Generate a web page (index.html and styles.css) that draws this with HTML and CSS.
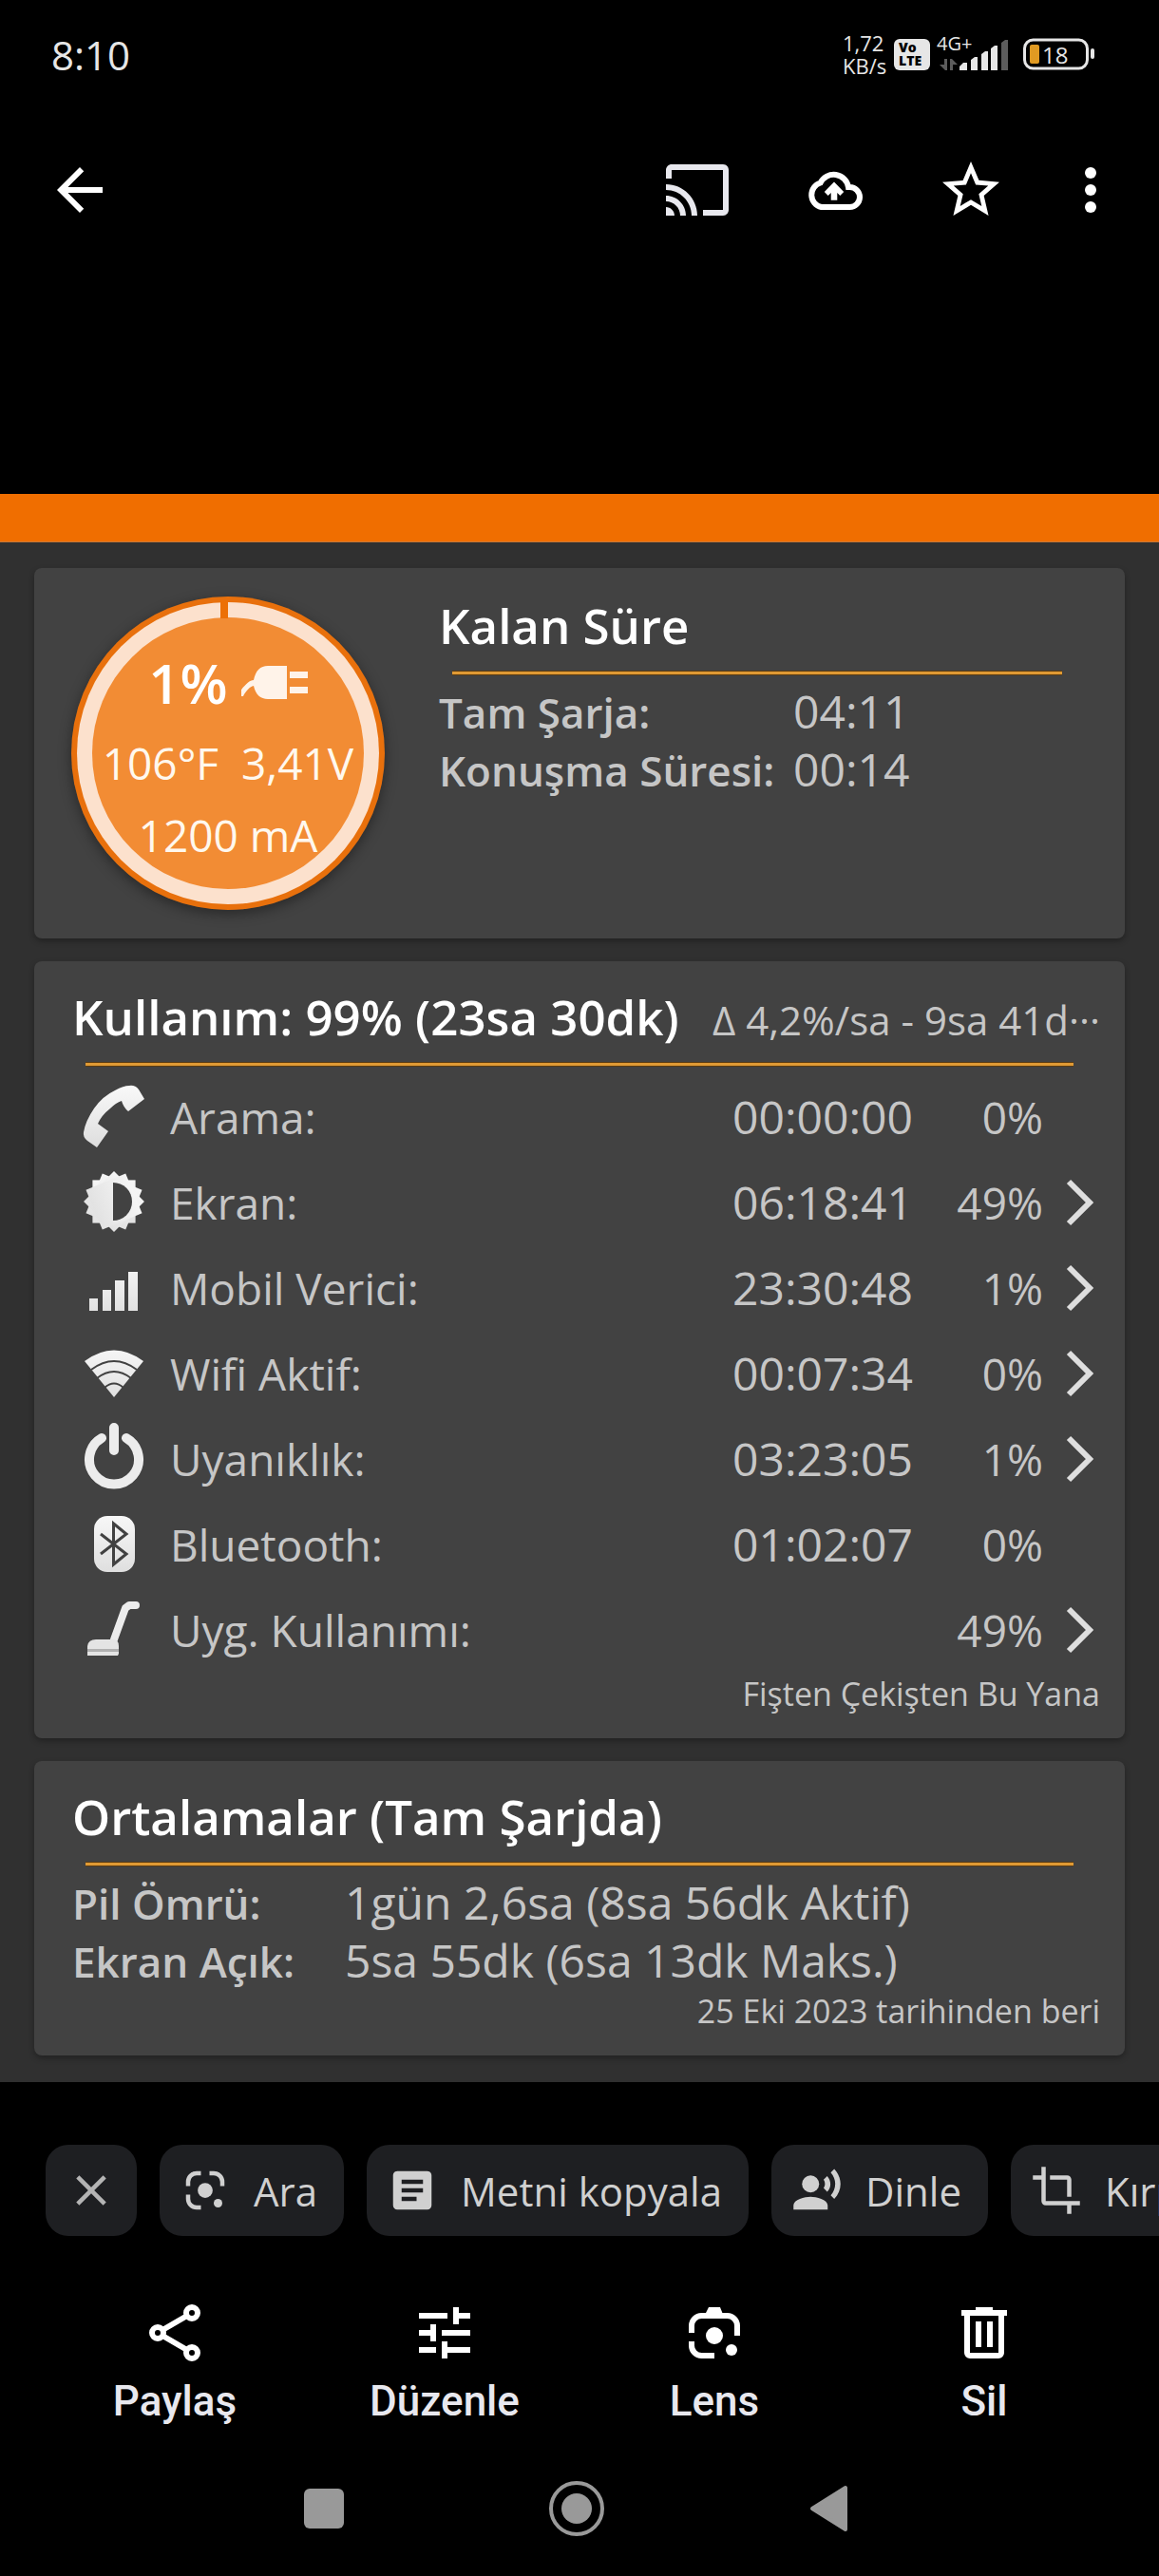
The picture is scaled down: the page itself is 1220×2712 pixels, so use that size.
FILE: index.html
```html
<!DOCTYPE html>
<html lang="tr">
<head>
<meta charset="utf-8">
<meta name="viewport" content="width=device-width, initial-scale=1">
<title>Fotoğraf</title>
<link rel="stylesheet" href="styles.css">
</head>
<body>
<div class="screen">
  <header class="status">
    <time class="clock">8:10</time>
    <div class="indicators">
      <div class="speed"><span>1,72</span><span>KB/s</span></div>
      <div class="volte"><span>Vo</span><span>LTE</span></div>
      <div class="signal">
        <span class="network">4G+</span>
        <svg class="signal-bars" viewBox="0 0 80 36" aria-hidden="true">
          <path fill="#5c5c5c" d="M9 23h3v12h-2l-6-6h5zM15 35V23h2l6 6h-5v6zM69 35V6l4-3h3v32z"/>
          <path fill="#e6e6e6" d="M25 35v-4l4-4h4v8zM37 35V24l4-3h3v14zM48 35V18l4-3h3v20zM58 35V12l4-3h3v26z"/>
        </svg>
      </div>
      <div class="battery">
        <svg viewBox="0 0 76 34" aria-hidden="true">
          <rect x="1.500" y="2" width="66" height="30" rx="9" fill="none" stroke="#e6e6e6" stroke-width="3"/>
          <rect x="7" y="7" width="10" height="20" rx="2" fill="#e09a22"/>
          <rect x="71" y="11" width="4" height="11" rx="2" fill="#e6e6e6"/>
        </svg>
        <span>18</span>
      </div>
    </div>
  </header>

  <nav class="toolbar" aria-label="Fotoğraf araçları">
    <button class="tool back" aria-label="Geri"><svg viewBox="0 0 24 24"><path d="M20 11H7.830l5.590-5.590L12 4l-8 8 8 8 1.410-1.410L7.830 13H20z"/></svg></button>
    <button class="tool" aria-label="Yayınla"><svg viewBox="0 0 24 24"><path fill="#e8e8ee" d="M21 3H3c-1.100 0-2 .9-2 2v3h2V5h18v14h-7v2h7c1.100 0 2-.9 2-2V5c0-1.100-.9-2-2-2zM1 18v3h3c0-1.660-1.340-3-3-3zm0-4v2c2.760 0 5 2.240 5 5h2c0-3.870-3.130-7-7-7zm0-4v2c4.970 0 9 4.030 9 9h2c0-6.080-4.930-11-11-11z"/></svg></button>
    <button class="tool" aria-label="Yedekle"><svg viewBox="0 0 24 24"><path fill="none" stroke="#fff" stroke-width="2" d="M7.500 18A4.400 4.400 0 0 1 7.200 9.500 5.200 5.200 0 0 1 17 11h.5a3.500 3.500 0 0 1 0 7z"/><path d="M12 9.200l3.400 3.500-1.300 1.300-1-1v2.600h-2.200V13l-1 1-1.300-1.300z"/></svg></button>
    <button class="tool" aria-label="Favori"><svg viewBox="0 0 24 24"><path d="M22 9.240l-7.190-.62L12 2 9.190 8.630 2 9.240l5.460 4.730L5.820 21 12 17.270 18.180 21l-1.630-7.030L22 9.240zM12 15.400l-3.760 2.270 1-4.280-3.320-2.880 4.380-.38L12 6.100l1.710 4.040 4.380.38-3.320 2.880 1 4.280L12 15.400z"/></svg></button>
    <button class="tool more" aria-label="Diğer"><svg viewBox="0 0 24 24"><circle cx="12" cy="6" r="2"/><circle cx="12" cy="12" r="2"/><circle cx="12" cy="18" r="2"/></svg></button>
  </nav>

  <main class="photo">
    <div class="accent"></div>
    <div class="cards">
      <section class="card remaining">
        <div class="gauge">
          <svg class="gauge-ring" viewBox="0 0 330 330" aria-hidden="true">
            <circle cx="165" cy="165" r="165" fill="#e8700c"/>
            <circle cx="165" cy="165" r="159" fill="#fce1cd"/>
            <circle cx="165" cy="165" r="143" fill="#f28c34"/>
            <path d="M157 4h8v19h-8z" fill="#ec7006"/>
          </svg>
          <div class="gauge-level">
            <strong>1%</strong>
            <svg class="plug" viewBox="0 0 70 36" aria-hidden="true"><path fill="#fff3e9" d="M0 32V25C5 19 9 15 13 15 15 5 20 0 28 0H48V35H28C20 35 15 30 13 21 9 22 5 26 2 32zM51 6H70V13H51zM51 22H70V29H51z"/></svg>
          </div>
          <div class="gauge-line">106°F&nbsp; 3,41V</div>
          <div class="gauge-line">1200 mA</div>
        </div>
        <div class="remaining-info">
          <h2>Kalan Süre</h2>
          <hr>
          <dl class="facts facts-remaining">
            <dt>Tam Şarja:</dt><dd>04:11</dd>
            <dt>Konuşma Süresi:</dt><dd>00:14</dd>
          </dl>
        </div>
      </section>

      <section class="card">
        <div class="heading">
          <h2>Kullanım: 99% (23sa 30dk)</h2>
          <span class="rate">Δ 4,2%/sa - 9sa 41d···</span>
        </div>
        <hr>
        <table class="usage">
          <tbody>
            <tr>
              <td class="icon"><svg viewBox="0 0 72 72"><defs><linearGradient id="silver" gradientUnits="userSpaceOnUse" x1="0" y1="0" x2="0" y2="72"><stop offset="0" stop-color="#fafafa"/><stop offset="1" stop-color="#dcdcdc"/></linearGradient></defs><path fill="url(#silver)" d="M52 3Q58 2 62 7L68 17 51 30Q46 26 44 19 38 21 32 27 23 34 19 43L30 51 18 68 8 61Q3 57 4 52 6 40 15 27 24 14 37 8 46 3 52 3z"/></svg></td>
              <th scope="row">Arama:</th><td class="time">00:00:00</td><td class="share">0%</td><td class="go"></td>
            </tr>
            <tr>
              <td class="icon"><svg viewBox="0 0 72 72"><g fill="url(#silver)"><rect x="13.400" y="12.400" width="45.200" height="45.200"/><rect x="13.400" y="12.400" width="45.200" height="45.200" transform="rotate(22.500 36 35)"/><rect x="13.400" y="12.400" width="45.200" height="45.200" transform="rotate(45 36 35)"/><rect x="13.400" y="12.400" width="45.200" height="45.200" transform="rotate(67.500 36 35)"/></g><path fill="#424242" d="M35 15a20 20 0 0 1 0 40z"/></svg></td>
              <th scope="row">Ekran:</th><td class="time">06:18:41</td><td class="share">49%</td>
              <td class="go"><button aria-label="Ekran ayrıntıları"><svg viewBox="0 0 36 60"><path d="M7 8L29 30 7 52"/></svg></button></td>
            </tr>
            <tr>
              <td class="icon"><svg viewBox="0 0 72 72"><path fill="url(#silver)" d="M10 47h9v13h-9zM24 38h9v22h-9zM37 28h10v32H37zM51 19h10v41H51z"/></svg></td>
              <th scope="row">Mobil Verici:</th><td class="time">23:30:48</td><td class="share">1%</td>
              <td class="go"><button aria-label="Mobil verici ayrıntıları"><svg viewBox="0 0 36 60"><path d="M7 8L29 30 7 52"/></svg></button></td>
            </tr>
            <tr>
              <td class="icon"><svg viewBox="0 0 72 72"><path fill="url(#silver)" d="M5 23Q36 0 67 23L36 61z"/><path fill="none" stroke="#424242" stroke-width="2" d="M12 32Q36 14 60 32M18 41Q36 27 54 41M26 51Q36 42 46 51"/></svg></td>
              <th scope="row">Wifi Aktif:</th><td class="time">00:07:34</td><td class="share">0%</td>
              <td class="go"><button aria-label="Wifi ayrıntıları"><svg viewBox="0 0 36 60"><path d="M7 8L29 30 7 52"/></svg></button></td>
            </tr>
            <tr>
              <td class="icon"><svg viewBox="0 0 72 72"><path fill="none" stroke="#ececec" stroke-width="10" stroke-linecap="round" d="M23 14A26 26 0 1 0 49 14M36 3V27"/></svg></td>
              <th scope="row">Uyanıklık:</th><td class="time">03:23:05</td><td class="share">1%</td>
              <td class="go"><button aria-label="Uyanıklık ayrıntıları"><svg viewBox="0 0 36 60"><path d="M7 8L29 30 7 52"/></svg></button></td>
            </tr>
            <tr>
              <td class="icon"><svg viewBox="0 0 72 72"><rect x="15" y="6" width="43" height="59" rx="14" fill="url(#silver)"/><path fill="none" stroke="#424242" stroke-width="3" d="M22 25L49 46 35.500 57V14L49 25 22 46"/></svg></td>
              <th scope="row">Bluetooth:</th><td class="time">01:02:07</td><td class="share">0%</td><td class="go"></td>
            </tr>
            <tr>
              <td class="icon"><svg viewBox="0 0 72 72"><path fill="none" stroke="#ececec" stroke-width="8" stroke-linecap="round" stroke-linejoin="round" d="M59 10H52L48 13 36 46"/><path fill="#e4e4e4" d="M8 63V53Q9 46 17 46H35Q41 46 41 53V61L40 63z"/><path fill="#b0b0b0" d="M8 56H41V59H8z"/></svg></td>
              <th scope="row">Uyg. Kullanımı:</th><td class="time"></td><td class="share">49%</td>
              <td class="go"><button aria-label="Uygulama kullanımı ayrıntıları"><svg viewBox="0 0 36 60"><path d="M7 8L29 30 7 52"/></svg></button></td>
            </tr>
          </tbody>
        </table>
        <p class="note">Fişten Çekişten Bu Yana</p>
      </section>

      <section class="card">
        <h2>Ortalamalar (Tam Şarjda)</h2>
        <hr>
        <dl class="facts facts-average">
          <dt>Pil Ömrü:</dt><dd>1gün 2,6sa (8sa 56dk Aktif)</dd>
          <dt>Ekran Açık:</dt><dd>5sa 55dk (6sa 13dk Maks.)</dd>
        </dl>
        <p class="note">25 Eki 2023 tarihinden beri</p>
      </section>
    </div>
  </main>

  <div class="chips">
    <button class="chip close" aria-label="Kapat"><svg viewBox="0 0 24 24"><path fill="#b4b4b4" d="M19 6.410L17.590 5 12 10.590 6.410 5 5 6.410 10.590 12 5 17.590 6.410 19 12 13.410 17.590 19 19 17.590 13.410 12z"/></svg></button>
    <button class="chip"><svg viewBox="0 0 24 24"><path fill="none" stroke="#d0d0d0" stroke-width="2" d="M4 10V8a4 4 0 0 1 4-4h2M14 4h2a4 4 0 0 1 4 4v2M4 14v2a4 4 0 0 0 4 4h2"/><circle cx="12" cy="12" r="3.500"/><circle cx="18" cy="18" r="2"/></svg>Ara</button>
    <button class="chip"><svg viewBox="0 0 24 24"><path d="M19 3H5c-1.100 0-2 .9-2 2v14c0 1.100.9 2 2 2h14c1.100 0 2-.9 2-2V5c0-1.100-.9-2-2-2zm-5 14H7v-2h7v2zm3-4H7v-2h10v2zm0-4H7V7h10v2z"/></svg>Metni kopyala</button>
    <button class="chip"><svg viewBox="0 0 24 24"><circle cx="9" cy="9" r="4"/><path d="M9 15c-2.670 0-8 1.340-8 4v2h16v-2c0-2.660-5.330-4-8-4zm7.760-9.640l-1.680 1.690c.84 1.180.84 2.710 0 3.890l1.680 1.690c2.020-2.020 2.020-5.070 0-7.270zM20.070 2l-1.630 1.630c2.770 3.020 2.770 7.560 0 10.740L20.070 16c3.900-3.890 3.910-9.950 0-14z"/></svg>Dinle</button>
    <button class="chip"><svg viewBox="0 0 24 24"><path d="M17 15h2V7c0-1.100-.9-2-2-2H9v2h8v8zM7 17V1H5v4H1v2h4v10c0 1.100.9 2 2 2h10v4h2v-4h4v-2H7z"/></svg>Kırp</button>
  </div>

  <nav class="actions" aria-label="İşlemler">
    <button class="action"><svg viewBox="0 0 24 24"><g fill="none" stroke="#fff" stroke-width="2"><circle cx="6" cy="12" r="2"/><circle cx="18" cy="5" r="2"/><circle cx="18" cy="19" r="2"/><path d="M7.700 11l8.600-5M7.700 13l8.600 5"/></g></svg>Paylaş</button>
    <button class="action"><svg viewBox="0 0 24 24"><path d="M3 5h10v2H3zM15 3h2v2h4v2h-4v2h-2zM3 11h4V9h2v6H7v-2H3zM11 11h10v2H11zM3 17h6v2H3zM11 15h2v2h8v2h-8v2h-2z"/></svg>Düzenle</button>
    <button class="action"><svg viewBox="0 0 24 24"><path fill="none" stroke="#fff" stroke-width="2" d="M4 12V9.500a3.500 3.500 0 0 1 3.500-3.500h9a3.500 3.500 0 0 1 3.500 3.500V13M4 15v1.500a3.500 3.500 0 0 0 3.500 3.500H12"/><path d="M9 5l1-2h4l1 2.500H9z"/><circle cx="12" cy="13" r="3"/><circle cx="18" cy="18" r="2"/></svg>Lens</button>
    <button class="action"><svg viewBox="0 0 24 24"><path fill-rule="evenodd" d="M4 4h5V3h6v1h5v2h-1v13a2 2 0 0 1-2 2H7a2 2 0 0 1-2-2V6H4zM7 6v13h10V6zM9 8h2v9H9zM13 8h2v9h-2z"/></svg>Sil</button>
  </nav>

  <nav class="system" aria-label="Sistem">
    <button aria-label="Son uygulamalar"><svg viewBox="0 0 60 60"><rect x="9" y="9" width="42" height="42" rx="6"/></svg></button>
    <button aria-label="Ana ekran"><svg viewBox="0 0 60 60"><circle cx="30" cy="30" r="27" fill="none" stroke="#999" stroke-width="4"/><circle cx="30" cy="30" r="16"/></svg></button>
    <button aria-label="Geri"><svg viewBox="0 0 60 60"><path stroke="#999" stroke-width="4" stroke-linejoin="round" d="M12 30L47 8V52z"/></svg></button>
  </nav>
</div>
</body>
</html>
```
FILE: styles.css
```css
* {
  box-sizing: border-box;
}

body {
  margin: 0;
  background: #000;
  color: #c6c6c6;
  font-family: "Open Sans", "Noto Sans", sans-serif;
  font-size: 46px;
}

button {
  display: flex;
  align-items: center;
  padding: 0;
  border: 0;
  background: none;
  color: inherit;
  font: inherit;
}

svg {
  display: block;
  flex: none;
  fill: #fff;
  overflow: visible;
}

h2,
p,
dl,
dd {
  margin: 0;
}

.screen {
  display: flex;
  flex-direction: column;
  min-height: 100vh;
  overflow: hidden;
}

/* Status bar */
.status {
  display: flex;
  align-items: center;
  justify-content: space-between;
  height: 114px;
  padding: 0 68px 0 54px;
  color: #e6e6e6;
}

.clock {
  font-size: 42px;
}

.indicators {
  display: flex;
  align-items: center;
}

.speed {
  display: flex;
  flex-direction: column;
  width: 54px;
  font-size: 22px;
  line-height: 24px;
}

.volte {
  display: flex;
  flex-direction: column;
  align-items: flex-start;
  width: 38px;
  height: 33px;
  padding: 2px 5px;
  border-radius: 6px;
  background: #e6e6e6;
  color: #000;
  font-size: 14px;
  font-weight: 800;
  line-height: 14px;
}

.signal {
  position: relative;
  width: 98px;
  height: 36px;
}

.signal-bars {
  width: 80px;
  height: 36px;
  margin-left: 6px;
}

.network {
  position: absolute;
  top: -3px;
  left: 7px;
  font-size: 20px;
  line-height: 20px;
}

.battery {
  position: relative;
  width: 75px;
}

.battery svg {
  width: 76px;
  height: 34px;
}

.battery span {
  position: absolute;
  top: 4px;
  left: 20px;
  font-size: 24px;
  line-height: 28px;
}

/* Photo toolbar */
.toolbar {
  display: flex;
  align-items: center;
  gap: 72px;
  height: 172px;
  padding: 0 36px 0 48px;
}

.tool svg {
  width: 72px;
  height: 72px;
}

.back {
  margin-right: auto;
}

.more {
  margin-left: -18px;
}

/* Displayed photo */
.photo {
  margin-top: 234px;
  background: #303030;
}

.accent {
  height: 51px;
  background: #f06e00;
  border-bottom: 1px solid #c87838;
}

.cards {
  display: flex;
  flex-direction: column;
  gap: 24px;
  padding: 27px 36px 28px;
}

.card {
  padding: 28px 26px 25px 40px;
  border-radius: 8px;
  background: #424242;
  box-shadow: 0 3px 6px rgba(0, 0, 0, 0.3);
}

h2 {
  color: #fff;
  font-size: 51px;
  font-weight: 600;
  line-height: 60px;
  white-space: nowrap;
}

hr {
  height: 5px;
  margin: 18px 28px 8px 14px;
  border: 1px solid #5c3c12;
  border-width: 1px 0;
  background: #e09a34;
}

.remaining {
  display: flex;
  gap: 57px;
  padding: 30px 38px 30px 39px;
}

.remaining-info {
  flex: 1;
}

.gauge {
  position: relative;
  display: flex;
  flex-direction: column;
  align-items: center;
  width: 330px;
  height: 330px;
  padding-top: 45px;
  border-radius: 50%;
  box-shadow: 0 4px 14px rgba(0, 0, 0, 0.4);
  color: #fff8ee;
}

.gauge-ring {
  position: absolute;
  inset: 0;
}

.gauge-level,
.gauge-line {
  position: relative;
  white-space: nowrap;
}

.gauge-level {
  display: flex;
  align-items: center;
  gap: 14px;
  color: #fff;
  font-size: 58px;
  line-height: 92px;
}

.gauge-level strong {
  font-weight: 600;
}

.plug {
  width: 70px;
  height: 36px;
}

.gauge-line {
  line-height: 76px;
}

.facts {
  display: grid;
  grid-auto-rows: 61px;
  align-items: baseline;
  font-size: 48px;
  line-height: 60px;
  white-space: nowrap;
}

.facts-remaining {
  grid-template-columns: 373px 1fr;
}

.facts-average {
  grid-template-columns: 287px 1fr;
}

.facts dt {
  font-size: 44px;
  font-weight: 600;
}

.heading {
  display: flex;
  align-items: baseline;
  justify-content: space-between;
}

.rate {
  font-size: 42px;
  line-height: 50px;
  white-space: nowrap;
}

.usage {
  width: 100%;
  border-collapse: collapse;
  line-height: 60px;
}

.usage td,
.usage th {
  height: 90px;
  padding: 0;
}

.usage th {
  font-weight: 500;
  text-align: left;
}

.usage .icon {
  width: 103px;
  padding-left: 8px;
}

.icon svg {
  width: 72px;
  height: 72px;
}

.usage .time {
  width: 194px;
  font-size: 48px;
  white-space: nowrap;
}

.usage .share {
  width: 133px;
  text-align: right;
}

.usage .go {
  width: 60px;
  padding-left: 20px;
}

.go svg {
  width: 36px;
  height: 60px;
  fill: none;
  stroke: #dedede;
  stroke-width: 6;
}

.note {
  font-size: 34px;
  line-height: 44px;
  text-align: right;
}

/* Suggestion chips */
.chips {
  display: flex;
  gap: 24px;
  margin-top: 66px;
  padding-left: 48px;
}

.chip {
  flex: none;
  gap: 24px;
  height: 96px;
  padding: 0 28px 0 21px;
  border-radius: 24px;
  background: #1e1f22;
  color: #d0d0d0;
  font-size: 42px;
}

.chip svg {
  width: 54px;
  height: 54px;
  fill: #d0d0d0;
}

.close {
  padding: 0 21px;
}

/* Bottom actions */
.actions {
  display: grid;
  grid-template-columns: repeat(4, 1fr);
  margin-top: 66px;
  padding: 0 42px;
}

.action {
  flex-direction: column;
  gap: 11px;
  color: #e8e8ee;
  font-family: Roboto, sans-serif;
  font-size: 44px;
  font-weight: 500;
  line-height: 50px;
}

.action svg {
  width: 72px;
  height: 72px;
}

/* Android navigation */
.system {
  display: flex;
  align-items: center;
  justify-content: center;
  gap: 206px;
  height: 142px;
  margin-top: auto;
  padding-right: 6px;
}

.system svg {
  width: 60px;
  height: 60px;
  fill: #999;
}
```
